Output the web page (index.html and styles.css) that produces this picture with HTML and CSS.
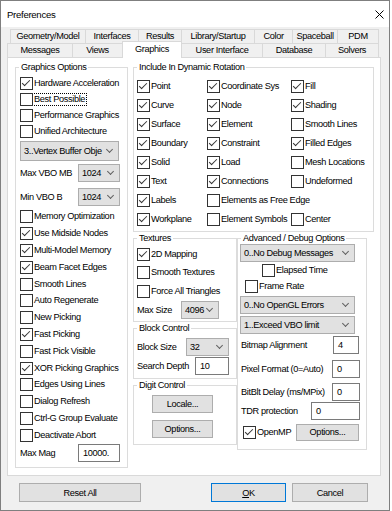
FILE: index.html
```html
<!DOCTYPE html>
<html>
<head>
<meta charset="utf-8">
<title>Preferences</title>
<link rel="stylesheet" href="styles.css">
</head>
<body>
<div class="win">
  <div class="titlebar">
    <span class="title">Preferences</span>
    <svg class="close" viewBox="0 0 9 9"><path d="M0.5 0.5 L8.5 8.5 M8.5 0.5 L0.5 8.5" stroke="#000" stroke-width="1" fill="none"/></svg>
  </div>
  <div class="body">
    <div class="tabrow row1">
      <div class="tab t-geo">Geometry/Model</div>
      <div class="tab t-int">Interfaces</div>
      <div class="tab t-res">Results</div>
      <div class="tab t-lib">Library/Startup</div>
      <div class="tab t-col">Color</div>
      <div class="tab t-spa">Spaceball</div>
      <div class="tab t-pdm">PDM</div>
    </div>
    <div class="tabrow row2">
      <div class="tab t-msg">Messages</div>
      <div class="tab t-vie">Views</div>
      <div class="tab t-gra sel">Graphics</div>
      <div class="tab t-ui">User Interface</div>
      <div class="tab t-db">Database</div>
      <div class="tab t-sol">Solvers</div>
    </div>
    <div class="panel">
      <fieldset class="grp go">
        <legend>Graphics Options</legend>
        <div class="go-in">
          <div class="cb r16"><span class="box on"></span><span class="lbl">Hardware Acceleration</span></div>
          <div class="cb r16"><span class="box"></span><span class="lbl focus">Best Possible</span></div>
          <div class="cb r16"><span class="box"></span><span class="lbl">Performance Graphics</span></div>
          <div class="cb r16"><span class="box"></span><span class="lbl">Unified Architecture</span></div>
          <div class="combo wide">3..Vertex Buffer Obje</div>
          <div class="frow vbo1"><span class="flbl w58">Max VBO MB</span><div class="combo c42">1024</div></div>
          <div class="frow vbo2"><span class="flbl w58">Min VBO B</span><div class="combo c42">1024</div></div>
          <div class="golist">
            <div class="cb r168"><span class="box"></span><span class="lbl">Memory Optimization</span></div>
            <div class="cb r168"><span class="box on"></span><span class="lbl">Use Midside Nodes</span></div>
            <div class="cb r168"><span class="box on"></span><span class="lbl">Multi-Model Memory</span></div>
            <div class="cb r168"><span class="box on"></span><span class="lbl">Beam Facet Edges</span></div>
            <div class="cb r168"><span class="box"></span><span class="lbl">Smooth Lines</span></div>
            <div class="cb r168"><span class="box"></span><span class="lbl">Auto Regenerate</span></div>
            <div class="cb r168"><span class="box"></span><span class="lbl">New Picking</span></div>
            <div class="cb r168"><span class="box on"></span><span class="lbl">Fast Picking</span></div>
            <div class="cb r168"><span class="box"></span><span class="lbl">Fast Pick Visible</span></div>
            <div class="cb r168"><span class="box on"></span><span class="lbl">XOR Picking Graphics</span></div>
            <div class="cb r168"><span class="box"></span><span class="lbl">Edges Using Lines</span></div>
            <div class="cb r168"><span class="box"></span><span class="lbl">Dialog Refresh</span></div>
            <div class="cb r168"><span class="box"></span><span class="lbl">Ctrl-G Group Evaluate</span></div>
            <div class="cb r168"><span class="box"></span><span class="lbl">Deactivate Abort</span></div>
          </div>
          <div class="frow mag"><span class="flbl w58">Max Mag</span><div class="inp i42">10000.</div></div>
        </div>
      </fieldset>

      <div class="col2">
        <fieldset class="grp dr">
          <legend>Include In Dynamic Rotation</legend>
          <div class="dr-grid">
            <div class="cb"><span class="box on"></span><span class="lbl">Point</span></div>
            <div class="cb"><span class="box on"></span><span class="lbl">Coordinate Sys</span></div>
            <div class="cb"><span class="box on"></span><span class="lbl">Fill</span></div>
            <div class="cb"><span class="box on"></span><span class="lbl">Curve</span></div>
            <div class="cb"><span class="box on"></span><span class="lbl">Node</span></div>
            <div class="cb"><span class="box on"></span><span class="lbl">Shading</span></div>
            <div class="cb"><span class="box on"></span><span class="lbl">Surface</span></div>
            <div class="cb"><span class="box on"></span><span class="lbl">Element</span></div>
            <div class="cb"><span class="box"></span><span class="lbl">Smooth Lines</span></div>
            <div class="cb"><span class="box on"></span><span class="lbl">Boundary</span></div>
            <div class="cb"><span class="box on"></span><span class="lbl">Constraint</span></div>
            <div class="cb"><span class="box on"></span><span class="lbl">Filled Edges</span></div>
            <div class="cb"><span class="box on"></span><span class="lbl">Solid</span></div>
            <div class="cb"><span class="box on"></span><span class="lbl">Load</span></div>
            <div class="cb"><span class="box"></span><span class="lbl">Mesh Locations</span></div>
            <div class="cb"><span class="box on"></span><span class="lbl">Text</span></div>
            <div class="cb"><span class="box on"></span><span class="lbl">Connections</span></div>
            <div class="cb"><span class="box"></span><span class="lbl">Undeformed</span></div>
            <div class="cb"><span class="box on"></span><span class="lbl">Labels</span></div>
            <div class="cb"><span class="box"></span><span class="lbl">Elements as Free Edge</span></div>
            <div class="cb empty"></div>
            <div class="cb"><span class="box on"></span><span class="lbl">Workplane</span></div>
            <div class="cb"><span class="box"></span><span class="lbl">Element Symbols</span></div>
            <div class="cb"><span class="box"></span><span class="lbl">Center</span></div>
          </div>
        </fieldset>

        <div class="lower">
          <div class="lcol">
            <fieldset class="grp tex">
              <legend>Textures</legend>
              <div class="tex-in">
                <div class="cb r185"><span class="box on"></span><span class="lbl">2D Mapping</span></div>
                <div class="cb r185"><span class="box"></span><span class="lbl">Smooth Textures</span></div>
                <div class="cb r185"><span class="box"></span><span class="lbl">Force All Triangles</span></div>
                <div class="frow r185"><span class="flbl w44">Max Size</span><div class="combo c38">4096</div></div>
              </div>
            </fieldset>
            <fieldset class="grp blk">
              <legend>Block Control</legend>
              <div class="blk-in">
                <div class="frow r18"><span class="flbl w49">Block Size</span><div class="combo c43">32</div></div>
                <div class="frow r18 gap1"><span class="flbl w58">Search Depth</span><div class="inp i34">10</div></div>
              </div>
            </fieldset>
            <fieldset class="grp dig">
              <legend>Digit Control</legend>
              <div class="dig-in">
                <button class="btn dbtn">Locale...</button>
                <button class="btn dbtn second">Options...</button>
              </div>
            </fieldset>
          </div>

          <fieldset class="grp adv">
            <legend>Advanced / Debug Options</legend>
            <div class="adv-in">
              <div class="combo c115">0..No Debug Messages</div>
              <div class="cb r16 ind22"><span class="box"></span><span class="lbl">Elapsed Time</span></div>
              <div class="cb r16 ind5"><span class="box"></span><span class="lbl">Frame Rate</span></div>
              <div class="combo c115 mt2">0..No OpenGL Errors</div>
              <div class="combo c115 mt2">1..Exceed VBO limit</div>
              <div class="arow mt2"><span class="albl">Bitmap Alignment</span><div class="inp i26 mr1">4</div></div>
              <div class="arow mt6"><span class="albl">Pixel Format (0=Auto)</span><div class="inp i28">0</div></div>
              <div class="arow mt5"><span class="albl">BitBlt Delay (ms/MPix)</span><div class="inp i28">0</div></div>
              <div class="arow mt1"><span class="albl">TDR protection</span><div class="inp i49">0</div></div>
              <div class="arow mt3">
                <div class="cb ind3"><span class="box on"></span><span class="lbl">OpenMP</span></div>
                <button class="btn obtn mr1">Options...</button>
              </div>
            </div>
          </fieldset>
        </div>
      </div>
    </div>

    <div class="footer">
      <button class="btn reset">Reset All</button>
      <button class="btn ok"><u>O</u>K</button>
      <button class="btn cancel">Cancel</button>
    </div>
  </div>
</div>
</body>
</html>
```

FILE: styles.css
```css
* { box-sizing: border-box; }
html, body { margin: 0; padding: 0; }
body {
  background: #ffffff;
  font-family: "Liberation Sans", Arial, sans-serif;
  font-size: 9.2px;
  letter-spacing: -0.35px;
  color: #000;
}

.win {
  width: 390px;
  height: 511px;
  border: 1px solid #7f7f7f;
  background: #f0f0f0;
  display: flex;
  flex-direction: column;
}

.titlebar {
  height: 26px;
  flex: none;
  background: #ffffff;
  display: flex;
  align-items: center;
  justify-content: space-between;
  padding: 0 5px 0 6px;
}
.title { font-size: 9.6px; letter-spacing: -0.3px; }
.close { width: 9px; height: 9px; display: block; }

.body {
  flex: 1;
  display: flex;
  flex-direction: column;
  padding-top: 2px;
}

/* tabs */
.tabrow { display: flex; height: 14px; flex: none; align-items: flex-start; }
.row1 { margin-left: 9px; }
.row2 { margin-left: 6px; }
.tab {
  height: 14px;
  border: 1px solid #d9d9d9;
  border-bottom: none;
  border-right: none;
  background: #f0f0f0;
  text-align: center;
  line-height: 13px;
  white-space: nowrap;
}
.tab:last-child { border-right: 1px solid #d9d9d9; }
.tab.sel {
  background: #ffffff;
  height: 17px;
  margin-top: -2px;
  line-height: 15px;
  position: relative;
  z-index: 1;
  border-right: 1px solid #d9d9d9;
}
.tab.sel + .tab { border-left: none; }
.t-geo { width: 75px; }
.t-int { width: 53px; }
.t-res { width: 43px; }
.t-lib { width: 73px; }
.t-col { width: 38px; }
.t-spa { width: 45px; }
.t-pdm { width: 42px; }
.t-msg { width: 65px; }
.t-vie { width: 50px; }
.t-gra { width: 60px; }
.t-ui  { width: 80px; }
.t-db  { width: 63px; }
.t-sol { width: 54px; }

/* panel */
.panel {
  flex: none;
  margin-left: 6px;
  width: 374px;
  height: 419px;
  border: 1px solid #d9d9d9;
  background: #ffffff;
  display: flex;
  align-items: flex-start;
  padding: 3px 0 0 7px;
}

fieldset.grp {
  margin: 0;
  padding: 0;
  min-width: 0;
  border: 1px solid #dcdcdc;
}
.grp legend {
  margin-left: 3px;
  padding: 0 2px;
  height: 12px;
  line-height: 12px;
  white-space: nowrap;
}

.go { width: 113px; height: 407px; flex: none; }
.go-in { padding: 2px 0 0 4px; }

.col2 { margin-left: 5px; width: 241px; display: flex; flex-direction: column; flex: none; }
.dr { width: 241px; height: 171px; }
.lower { display: flex; align-items: flex-start; }
.lcol { width: 104px; display: flex; flex-direction: column; flex: none; }
.tex { height: 90px; }
.blk { height: 57px; margin-top: 2px; }
.dig { height: 66px; margin-top: 1px; }
.adv { width: 130px; height: 218px; margin-left: 7px; margin-top: 3px; flex: none; }

/* checkbox rows */
.cb { display: flex; align-items: center; white-space: nowrap; }
.r16 { height: 16px; }
.r168 { height: 16.8px; }
.r185 { height: 18.5px; }
.r18 { height: 18px; }
.box {
  width: 13px;
  height: 13px;
  flex: none;
  border: 1px solid #333333;
  background: #ffffff;
  position: relative;
}
.box.on::after {
  content: "";
  position: absolute;
  left: 3px;
  top: 0px;
  width: 3px;
  height: 7px;
  border: solid #333333;
  border-width: 0 1px 1px 0;
  transform: rotate(45deg);
}
.lbl { padding: 0 1px; line-height: 11px; }
.lbl.focus { outline: 1px dotted #000; }

.golist { margin-top: 1.5px; }

/* form rows */
.frow { display: flex; align-items: center; white-space: nowrap; }
.flbl { flex: none; }
.w58 { width: 58px; }
.w44 { width: 44px; }
.w49 { width: 49px; }
.vbo1 { height: 20px; margin-top: 2px; }
.vbo2 { height: 20px; margin-top: 4px; }
.mag { height: 18px; margin-top: 0.3px; }

.combo {
  height: 18px;
  flex: none;
  background: #e1e1e1;
  border: 1px solid #adadad;
  display: flex;
  align-items: center;
  justify-content: space-between;
  padding: 0 6px 0 3px;
  white-space: nowrap;
  overflow: hidden;
}
.combo::after {
  content: "";
  width: 4px;
  height: 4px;
  flex: none;
  border: solid #606060;
  border-width: 0 1px 1px 0;
  transform: rotate(45deg);
  margin-top: -3px;
}
.combo.wide { width: 99px; height: 20px; margin-top: 2px; }
.c42 { width: 42px; }
.c38 { width: 38px; }
.c43 { width: 43px; }
.c115 { width: 115px; }

.inp {
  height: 18px;
  flex: none;
  border: 1px solid #7a7a7a;
  background: #ffffff;
  display: flex;
  align-items: center;
  padding-left: 4px;
}
.i42 { width: 42px; }
.i34 { width: 34px; }
.i26 { width: 26px; }
.i28 { width: 28px; }
.i49 { width: 49px; }

.dr-grid {
  display: grid;
  grid-template-columns: 70px 84px 1fr;
  grid-auto-rows: 19px;
  padding: 3.5px 0 0 3px;
}

.tex-in { padding: 0.75px 0 0 3px; }
.blk-in { padding: 4px 0 0 3px; }
.gap1 { margin-top: 1px; }
.dig-in { padding: 4px 0 0 18px; display: flex; flex-direction: column; align-items: flex-start; }

.btn {
  font: inherit;
  letter-spacing: inherit;
  color: #000;
  background: #e1e1e1;
  border: 1px solid #adadad;
  padding: 0;
  margin: 0;
  display: flex;
  align-items: center;
  justify-content: center;
}
.dbtn { width: 61px; height: 18px; }
.dbtn.second { margin-top: 7px; }

.adv-in { padding: 0 6px 0 2px; }
.ind22 { padding-left: 22px; }
.ind5 { padding-left: 5px; }
.ind3 { padding-left: 3px; }
.mt1 { margin-top: 1px; }
.mt2 { margin-top: 2px; }
.mt3 { margin-top: 3px; }
.mt5 { margin-top: 5px; }
.mt6 { margin-top: 6px; }
.mr1 { margin-right: 1px; }
.arow {
  display: flex;
  align-items: center;
  justify-content: space-between;
  height: 18px;
  white-space: nowrap;
}
.albl { padding-left: 1px; }
.obtn { width: 63px; height: 17px; }

/* footer */
.footer {
  flex: none;
  display: flex;
  height: 19px;
  margin-top: 7px;
  padding: 0 21px 0 18px;
}
.footer .btn { height: 19px; }
.reset { width: 122px; }
.ok { width: 75px; margin-left: auto; border-color: #0078d7; }
.cancel { width: 76px; margin-left: 6px; }
```
